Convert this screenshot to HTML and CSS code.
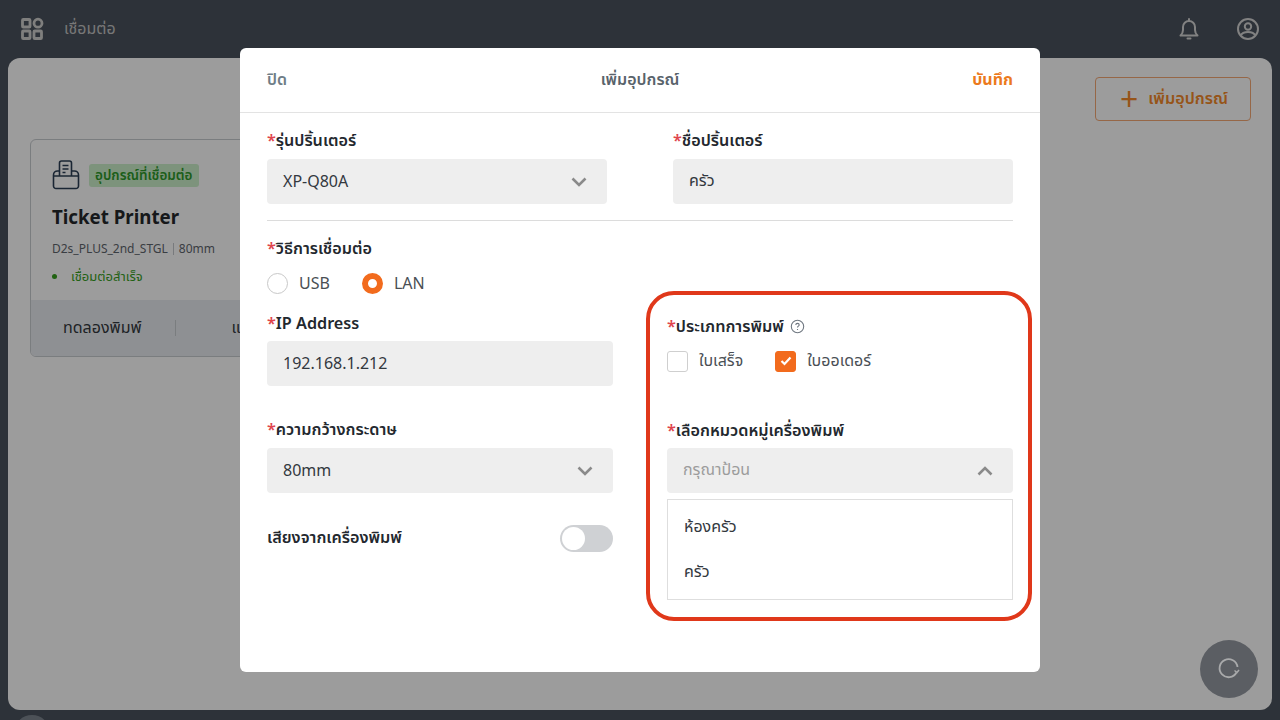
FILE: index.html
```html
<!DOCTYPE html>
<html lang="th">
<head>
  <meta charset="UTF-8">
  <title>เชื่อมต่อ</title>
  <meta name="viewport" content="width=device-width, initial-scale=1.0">
  <link rel="stylesheet" href="styles.css">
</head>
<body>
  <header class="top-bar">
    <div class="top-left">
      <svg class="grid-icon" width="24" height="24" viewBox="0 0 24 24" fill="none" stroke="currentColor" stroke-width="2.800">
        <rect x="2.500" y="2.500" width="7.500" height="7.500" rx="0.800"/>
        <circle cx="18" cy="6.200" r="4"/>
        <rect x="2.500" y="14" width="7.500" height="7.500" rx="0.800"/>
        <rect x="14" y="14" width="7.500" height="7.500" rx="0.800"/>
      </svg>
      <span class="page-title">เชื่อมต่อ</span>
    </div>
    <div class="top-right">
      <svg width="24" height="24" viewBox="0 0 24 24" fill="none" stroke="currentColor" stroke-width="2" stroke-linejoin="round" stroke-linecap="round">
        <path d="M3.500 18.500h17c-1.600-1.500-2.500-3-2.500-5.500v-3a6 6 0 0 0-12 0v3c0 2.500-.9 4-2.500 5.500z"/>
        <path d="M12 2v2M10.500 21.500h3"/>
      </svg>
      <svg width="24" height="24" viewBox="0 0 24 24" fill="none" stroke="currentColor" stroke-width="2">
        <circle cx="12" cy="12" r="10"/>
        <circle cx="12" cy="9.500" r="3.200"/>
        <path d="M5 18.500c1-2.800 3.500-3.500 7-3.500s6 .7 7 3.500"/>
      </svg>
    </div>
  </header>

  <main class="panel">
    <div class="panel-head">
      <button class="add-btn"><span class="plus">+</span> เพิ่มอุปกรณ์</button>
    </div>
    <section class="device-card">
      <div class="card-body">
        <div class="card-top">
          <svg width="28" height="30" viewBox="0 0 28 30" fill="none" stroke="currentColor" stroke-width="1.600" stroke-linejoin="round">
            <path d="M7.500 16V3a2 2 0 0 1 2-2h8a2 2 0 0 1 2 2v13"/>
            <path d="M10.500 5.500h6M10.500 9h6M10.500 12.500h3"/>
            <path d="M7.500 11H5.500a4 4 0 0 0-4 4V26a2.500 2.500 0 0 0 2.500 2.500h20a2.500 2.500 0 0 0 2.500-2.500V15a4 4 0 0 0-4-4h-3"/>
            <path d="M1.500 16h25"/>
          </svg>
          <span class="badge">อุปกรณ์ที่เชื่อมต่อ</span>
        </div>
        <h3 class="device-name">Ticket Printer</h3>
        <p class="device-meta">D2s_PLUS_2nd_STGL<i></i>80mm</p>
        <p class="device-status"><b></b>เชื่อมต่อสำเร็จ</p>
      </div>
      <div class="card-foot">
        <span>ทดลองพิมพ์</span>
        <i></i>
        <span>แก้ไข</span>
      </div>
    </section>
  </main>
  <div class="bottom-strip"><span class="bottom-dot"></span></div>

  <div class="overlay">
    <div class="modal">
      <div class="modal-head">
        <span class="close">ปิด</span>
        <span class="modal-title">เพิ่มอุปกรณ์</span>
        <span class="save">บันทึก</span>
      </div>
      <div class="modal-body">
        <div class="row-top">
          <div>
            <label class="lbl"><em>*</em>รุ่นปริ้นเตอร์</label>
            <div class="field">XP-Q80A
              <svg class="chev" width="16" height="10" viewBox="0 0 16 10"><path d="M1.500 1.500L8 8l6.500-6.500"/></svg>
            </div>
          </div>
          <div>
            <label class="lbl"><em>*</em>ชื่อปริ้นเตอร์</label>
            <div class="field">ครัว</div>
          </div>
        </div>
        <div class="divider"></div>
        <div class="row-main">
          <div class="col-left">
            <label class="lbl"><em>*</em>วิธีการเชื่อมต่อ</label>
            <div class="options radios">
              <span class="opt"><span class="radio"></span>USB</span>
              <span class="opt"><span class="radio on"></span>LAN</span>
            </div>
            <label class="lbl ip-lbl"><em>*</em>IP Address</label>
            <div class="field">192.168.1.212</div>
            <label class="lbl gap-lbl"><em>*</em>ความกว้างกระดาษ</label>
            <div class="field">80mm
              <svg class="chev" width="16" height="10" viewBox="0 0 16 10"><path d="M1.500 1.500L8 8l6.500-6.500"/></svg>
            </div>
            <div class="sound-row">
              <span class="lbl">เสียงจากเครื่องพิมพ์</span>
              <span class="toggle"><span class="knob"></span></span>
            </div>
          </div>
          <div class="col-right">
            <label class="lbl"><em>*</em>ประเภทการพิมพ์
              <svg class="help" width="15" height="15" viewBox="0 0 15 15" fill="none" stroke="#6f7780" stroke-width="1.100">
                <circle cx="7.500" cy="7.500" r="6.200"/>
                <path d="M5.800 6c0-1 .8-1.600 1.700-1.600s1.700.6 1.700 1.500c0 1.200-1.700 1.200-1.700 2.500"/>
                <path d="M7.500 10v1"/>
              </svg>
            </label>
            <div class="options checks">
              <span class="opt"><span class="check"></span>ใบเสร็จ</span>
              <span class="opt"><span class="check on">
                <svg width="12" height="10" viewBox="0 0 12 10" fill="none" stroke="#fff" stroke-width="2.200"><path d="M1.500 5l3 3 6-6.500"/></svg>
              </span>ใบออเดอร์</span>
            </div>
            <label class="lbl group-lbl"><em>*</em>เลือกหมวดหมู่เครื่องพิมพ์</label>
            <div class="field placeholder">กรุณาป้อน
              <svg class="chev" width="16" height="10" viewBox="0 0 16 10"><path d="M1.500 8.500L8 2l6.500 6.500"/></svg>
            </div>
            <ul class="dropdown">
              <li>ห้องครัว</li>
              <li>ครัว</li>
            </ul>
          </div>
        </div>
      </div>
    </div>
  </div>

  <!-- annotation drawn over the screenshot -->
  <div class="highlight"></div>

  <div class="fab">
    <svg width="24" height="24" viewBox="0 0 24 24" fill="none" stroke="#a9aaab" stroke-width="1.800">
      <path d="M19.500 15.500A9 9 0 1 1 20.500 10"/>
      <path d="M17.500 13.500l2.500 2 2-2.500" stroke-width="1.600"/>
    </svg>
  </div>
</body>
</html>
```

FILE: styles.css
```css
* {
  box-sizing: border-box;
}

body {
  margin: 0;
  height: 720px;
  overflow: hidden;
  background: #4a525d;
  color: #23282e;
  font-family: "Noto Sans", "Noto Sans Thai", "Open Sans", sans-serif;
  font-size: 16px;
  display: flex;
  flex-direction: column;
}

/* page behind the modal */
.top-bar {
  height: 58px;
  flex: none;
  display: flex;
  justify-content: space-between;
  align-items: center;
  padding: 0 20px;
  color: #fff;
}

.top-left {
  display: flex;
  align-items: center;
  gap: 20px;
}

.top-left svg {
  color: #d0d0ce;
}

.page-title {
  font-size: 16px;
  color: #c4c4c4;
}

.top-right {
  display: flex;
  gap: 35px;
  color: #d4d4d4;
}

.panel {
  height: 652px;
  flex: none;
  margin: 0 8px;
  padding: 19px 21px 0 22px;
  background: #fff;
  border-radius: 12px;
}

.panel-head {
  display: flex;
  justify-content: flex-end;
  height: 62px;
}

.add-btn {
  width: 156px;
  height: 44px;
  font: 600 16.200px "Noto Sans", "Noto Sans Thai", sans-serif;
  color: #f58a2a;
  background: none;
  border: 1px solid #f5a875;
  border-radius: 4px;
  display: flex;
  align-items: center;
  justify-content: center;
  gap: 10px;
  padding-left: 8px;
}

.plus {
  font-size: 32px;
  font-weight: 400;
  line-height: 1;
}

.device-card {
  width: 420px;
  height: 218px;
  border: 1px solid #c8ccd0;
  border-radius: 6px;
  overflow: hidden;
  display: flex;
  flex-direction: column;
}

.card-body {
  height: 160px;
  padding: 20px 21px 0;
}

.card-top {
  display: flex;
  align-items: center;
  gap: 9px;
  color: #2c3f55;
}

.badge {
  background: #cdf0cb;
  color: #2f9a2c;
  font-size: 13.500px;
  font-weight: 600;
  line-height: 23px;
  padding: 0 6px;
  border-radius: 3px;
}

.device-name {
  margin: 13px 0 0;
  font-size: 18.700px;
  line-height: 28px;
  font-weight: 700;
  color: #24282c;
}

.device-meta {
  margin: 9px 0 0;
  font-size: 12px;
  line-height: 18px;
  color: #5f666e;
  display: flex;
  align-items: center;
}

.device-meta i {
  width: 1px;
  height: 12px;
  background: #c5c8cc;
  margin: 0 5px;
}

.device-status {
  margin: 9px 0 0;
  font-size: 13px;
  line-height: 18px;
  color: #36a01e;
  display: flex;
  align-items: center;
}

.device-status b {
  width: 5px;
  height: 5px;
  border-radius: 50%;
  background: #36a01e;
  margin-right: 14px;
}

.card-foot {
  flex: 1;
  background: #e9ecf0;
  display: flex;
  align-items: center;
  padding-left: 32px;
  font-size: 16px;
  color: #33383e;
}

.card-foot i {
  width: 1px;
  height: 16px;
  background: #c8ccd0;
  margin: 0 56px 0 33px;
}

.bottom-strip {
  flex: 1;
  position: relative;
  overflow: hidden;
}

.bottom-dot {
  position: absolute;
  left: 14px;
  top: 5px;
  width: 36px;
  height: 36px;
  border-radius: 50%;
  background: #7d858f;
}

.overlay {
  position: fixed;
  inset: 0;
  background: rgba(0, 0, 0, 0.39);
  display: flex;
  justify-content: center;
  padding-top: 48px;
}

/* modal */
.modal {
  width: 800px;
  height: 624px;
  background: #fff;
  border-radius: 6px;
}

.modal-head {
  height: 65px;
  border-bottom: 1px solid #e3e3e3;
  padding: 0 27px;
  display: grid;
  grid-template-columns: 1fr auto 1fr;
  align-items: center;
  font-size: 16px;
  font-weight: 600;
}

.close {
  color: #6f7d87;
}

.modal-title {
  color: #59636b;
}

.save {
  color: #ec7a1c;
  text-align: right;
  font-weight: 700;
}

.modal-body {
  padding: 16px 27px 0;
}

.row-top {
  display: grid;
  grid-template-columns: 340px 340px;
  column-gap: 66px;
}

.lbl {
  display: block;
  height: 22px;
  line-height: 22px;
  font-size: 16.200px;
  font-weight: 600;
  color: #23282e;
}

.lbl em {
  font-style: normal;
  color: #e0444c;
}

.field {
  height: 45px;
  margin-top: 8px;
  padding: 0 20px 2px 16px;
  background: #eeeeee;
  border-radius: 4px;
  display: flex;
  justify-content: space-between;
  align-items: center;
  font-size: 16px;
  color: #33383e;
}

.field svg {
  margin-top: 2px;
}

.field.placeholder {
  color: #9c9c9c;
  margin-top: 7px;
}

.chev {
  fill: none;
  stroke: #8a8a8a;
  stroke-width: 2.600;
}

.divider {
  height: 1px;
  margin: 16px 0;
  background: #dcdcdc;
}

.row-main {
  display: grid;
  grid-template-columns: 346px 346px;
  column-gap: 54px;
}

.options {
  display: flex;
  align-items: center;
  height: 22px;
  margin-top: 13px;
  font-size: 16px;
  color: #4a4f55;
}

.radios {
  gap: 32px;
}

.checks {
  gap: 32px;
}

.opt {
  display: flex;
  align-items: center;
  gap: 11px;
}

.radio {
  width: 21px;
  height: 21px;
  border-radius: 50%;
  border: 1px solid #c8c8c8;
  background: #fff;
}

.radio.on {
  border: 6.500px solid #f26b1d;
}

.check {
  width: 21px;
  height: 21px;
  border: 1px solid #cfcfcf;
  border-radius: 3px;
  display: flex;
  align-items: center;
  justify-content: center;
}

.check.on {
  background: #f26b1d;
  border-color: #f26b1d;
}

.ip-lbl {
  margin-top: 18px;
}

.col-left .ip-lbl + .field {
  margin-top: 7px;
}

.gap-lbl {
  margin-top: 32px;
}

.sound-row {
  margin-top: 32px;
  height: 27px;
  display: flex;
  justify-content: space-between;
  align-items: center;
}

.sound-row .lbl {
  margin-top: -4px;
}

.toggle {
  width: 53px;
  height: 27px;
  padding: 2px;
  background: #cfd1d4;
  border-radius: 14px;
}

.knob {
  display: block;
  width: 23px;
  height: 23px;
  background: #fff;
  border-radius: 50%;
}

.col-right {
  padding-top: 78px;
}

.help {
  vertical-align: -2px;
  margin-left: 2px;
}

.group-lbl {
  margin-top: 47px;
}

.dropdown {
  list-style: none;
  margin: 6px 0 0;
  padding: 4px 0;
  height: 101px;
  border: 1px solid #dedede;
}

.dropdown li {
  height: 45px;
  line-height: 45px;
  padding-left: 16px;
  font-size: 16px;
  color: #33383e;
}

.highlight {
  position: fixed;
  left: 646px;
  top: 291px;
  width: 386px;
  height: 330px;
  border: 4px solid #e0381a;
  border-radius: 28px;
}

.fab {
  position: fixed;
  left: 1200px;
  top: 640px;
  width: 58px;
  height: 58px;
  border-radius: 50%;
  background: #5b5e63;
  display: flex;
  align-items: center;
  justify-content: center;
}
```
